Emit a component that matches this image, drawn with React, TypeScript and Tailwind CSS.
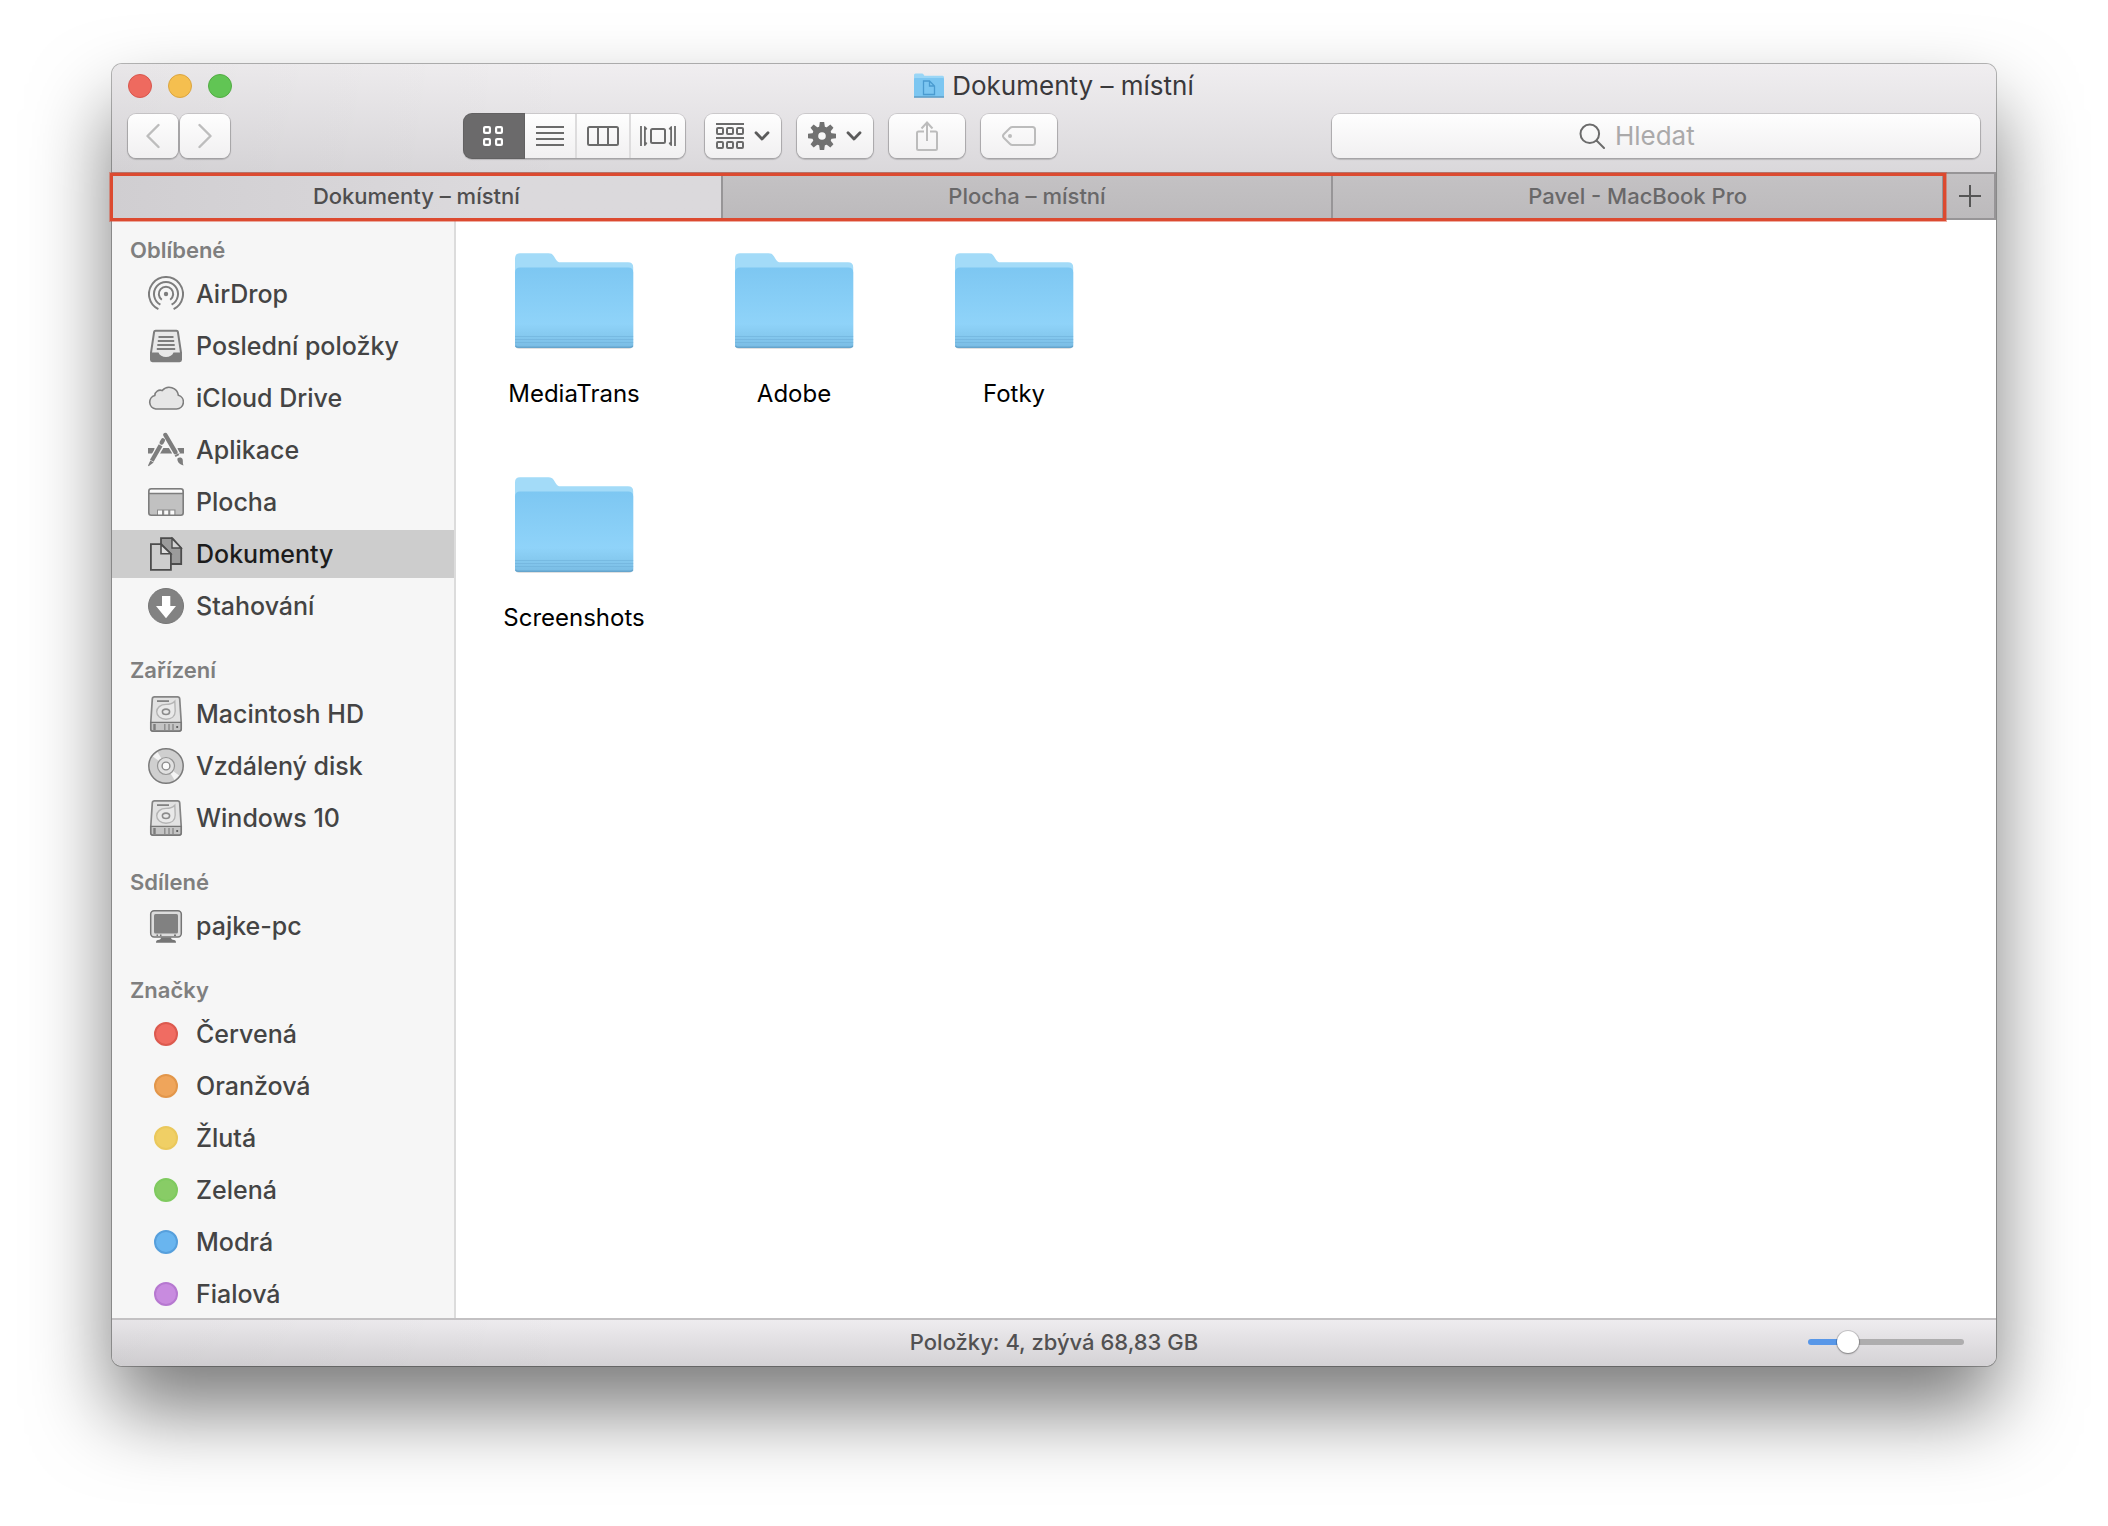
import type { ReactNode } from "react";

type SidebarItem = {
  label: string;
  icon: ReactNode;
  active?: boolean;
};

type SidebarSection = {
  title: string;
  items: SidebarItem[];
};

function AirDropIcon() {
  return (
    <svg viewBox="0 0 36 36" className="size-9" fill="none" stroke="#7d7d7d" strokeWidth="2">
      <path d="M10.4 33.2a17 17 0 1 1 15.2 0" />
      <path d="M12.4 28.6a12 12 0 1 1 11.2 0" />
      <path d="M13.8 23.8a7.2 7.2 0 1 1 8.4 0" />
      <circle cx="18" cy="18" r="2.2" fill="#7d7d7d" stroke="none" />
    </svg>
  );
}

function RecentsIcon() {
  return (
    <svg viewBox="0 0 36 36" className="size-9">
      <path
        d="M7.5 2.8h21q1.2 0 1.4 1.2l3.1 20.5v7.3q0 1.4-1.4 1.4H4.4q-1.4 0-1.4-1.4v-7.3L6.1 4q.2-1.2 1.4-1.2z"
        fill="#e8e8e8"
        stroke="#7d7d7d"
        strokeWidth="2"
      />
      <path d="M3 24.5h7.5c1 2.800 4 4.5 7.5 4.5s6.500-1.700 7.500-4.500H33v8.5H3z" fill="#7d7d7d" />
      <path d="M10.5 9h15M9.800 13h16.400M9.300 17h17.400M8.800 21h18.400" stroke="#7d7d7d" strokeWidth="1.8" />
    </svg>
  );
}

function CloudIcon() {
  return (
    <svg viewBox="0 0 36 36" className="size-9">
      <path
        d="M7.8 29H28.5a7 7 0 0 0 1.9-13.7A9.2 9.2 0 0 0 14.2 10.6 5.4 5.4 0 0 0 6.8 15.5 6.9 6.9 0 0 0 7.8 29z"
        fill="#e6e6e6"
        stroke="#7d7d7d"
        strokeWidth="1.6"
      />
    </svg>
  );
}

function AppsIcon() {
  return (
    <svg viewBox="0 0 36 36" className="size-9" fill="none" stroke="#7d7d7d">
      <path d="M0 18.8h6.5M12 18.8h12M29.5 18.8H36" strokeWidth="5.6" />
      <path d="M3.5 29.5 14 11.2" stroke="#f6f6f6" strokeWidth="7" />
      <path d="M17.2 3 29 22.8" stroke="#f6f6f6" strokeWidth="7" />
      <path d="M3.8 28.8 12.6 13.4" strokeWidth="4.2" />
      <path d="M13.6 10.6 15 8.2" strokeWidth="4.2" strokeLinecap="round" />
      <path d="M2.3 28.4 5.6 30.4.6 34.2 0 33.6z" fill="#7d7d7d" stroke="none" />
      <path d="M17.4 3 27.4 20.2" strokeWidth="4.4" strokeLinecap="round" />
      <path d="M28.4 22.4 29.4 24" strokeWidth="4.2" />
      <path d="M29.4 26.6c1.5-1.8 4.6-1.2 5.2.6.6 2-.2 3.8.9 6.2-3.6-.4-6.6-3.6-6.1-6.8z" fill="#7d7d7d" stroke="none" />
    </svg>
  );
}

function DesktopIcon() {
  return (
    <svg viewBox="0 0 36 36" className="size-9">
      <rect x="0.8" y="4.8" width="34.4" height="26.4" rx="2.4" fill="#c1c1c1" />
      <path d="M1.5 5.5h33v4h-33z" fill="#fafafa" />
      <path d="M9 31v-5.5h18.5V31z" fill="#8a8a8a" />
      <path d="M10 26.5h4V31h-4zM16.2 26.5h4V31h-4zM22.3 26.5h4V31h-4z" fill="#fafafa" />
      <path d="M1 9.5h34" stroke="#7d7d7d" strokeWidth="1.4" />
      <rect x="0.8" y="4.8" width="34.4" height="26.4" rx="2.4" fill="none" stroke="#7d7d7d" strokeWidth="1.6" />
    </svg>
  );
}

function DocumentsIcon() {
  return (
    <svg viewBox="0 0 36 36" className="size-9" stroke="#4c4c4c" strokeWidth="1.8">
      <path d="M13 2.2h11.3L33.2 12v16H13z" fill="#9b9b9b" />
      <path d="M24 2.4V12h9.2z" fill="#d2d2d2" strokeWidth="1.4" />
      <path d="M2.900 8.200h10.300l9.700 9.600v16H2.900z" fill="#cdcdcd" />
      <path d="M13 8.400v9.400h9.700z" fill="#dedede" strokeWidth="1.6" />
    </svg>
  );
}

function DownloadsIcon() {
  return (
    <svg viewBox="0 0 36 36" className="size-9">
      <circle cx="18" cy="18" r="17.5" fill="#828282" stroke="#777" />
      <path d="M14 8h8.3v10H28L18 30.2 8 18h6z" fill="#fff" />
    </svg>
  );
}

function HardDriveIcon() {
  return (
    <svg viewBox="0 0 36 36" className="size-9">
      <path
        d="M6.5.9h23q2 0 2.2 2L33.2 26v7q0 2.100-2.100 2.100H4.900q-2.100 0-2.100-2.100v-7L4.300 2.900q.2-2 2.200-2z"
        fill="#e2e2e2"
        stroke="#858585"
        strokeWidth="1.7"
      />
      <path d="M2.9 26.4h30.200V33q0 2-2 2H4.900q-2 0-2-2z" fill="#c4c4c4" stroke="#757575" strokeWidth="1.4" />
      <path d="M9 5.1h12" stroke="#7d7d7d" strokeWidth="1.7" />
      <path
        d="M26.8 5.2c-2.6 3-5 3.2-8.8 3.2-5.6 0-9.3 3.4-9.3 7.4s4 7.4 9.3 7.4c5.6 0 9.2-3.2 9.2-8.2z"
        fill="#e9e9e9"
        stroke="#b4b4b4"
        strokeWidth="1.4"
      />
      <ellipse cx="18" cy="15.8" rx="3.6" ry="2.7" fill="#e9e9e9" stroke="#8b8b8b" strokeWidth="1.6" />
      <path d="M6.5 28v6" stroke="#7d7d7d" strokeWidth="2.4" />
      <path d="M16.8 28v6M21 28v6M25 28v6" stroke="#8b8b8b" strokeWidth="1.4" />
      <path d="M28.3 30h1.8v2h-1.8z" fill="#5e5e5e" />
    </svg>
  );
}

function DiscIcon() {
  return (
    <svg viewBox="0 0 36 36" className="size-9">
      <circle cx="18" cy="18" r="17" fill="#cfcfcf" />
      <path d="M18 18 4.8 8.5 9.5 4z" fill="#f4f4f4" />
      <path d="M18 18 31.2 27.5 26.5 32z" fill="#f4f4f4" />
      <circle cx="18" cy="18" r="17.2" fill="none" stroke="#7a7a7a" strokeWidth="1.5" />
      <circle cx="18" cy="18" r="8.5" fill="#e0e0e0" stroke="#949494" strokeWidth="1.2" />
      <circle cx="18" cy="18" r="3.9" fill="#fafafa" stroke="#8a8a8a" strokeWidth="1.4" />
    </svg>
  );
}

function ComputerIcon() {
  return (
    <svg viewBox="0 0 36 36" className="size-9">
      <rect x="2.7" y="2.7" width="30.6" height="26.2" rx="3.4" fill="#dcdcdc" stroke="#757575" strokeWidth="1.5" />
      <rect x="6" y="6" width="24" height="19.5" rx="1.5" fill="#818181" />
      <path d="M8.5 26.5H10v1.600H8.500zM12 26.500h1.500v1.600H12zM26 26.500h2v1.600h-2z" fill="#757575" />
      <path d="M13 29.5h10c0 1.5 1 2.2 3 2.6 1.4.3 2 1 2 2.600H8c0-1.600.6-2.300 2-2.600 2-.4 3-1.100 3-2.600z" fill="#757575" />
    </svg>
  );
}

function TagDot({ className }: { className: string }) {
  return (
    <span className="flex size-9 items-center justify-center">
      <span className={`size-6 rounded-full border-2 ${className}`} />
    </span>
  );
}

const sections: SidebarSection[] = [
  {
    title: "Oblíbené",
    items: [
      { label: "AirDrop", icon: <AirDropIcon /> },
      { label: "Poslední položky", icon: <RecentsIcon /> },
      { label: "iCloud Drive", icon: <CloudIcon /> },
      { label: "Aplikace", icon: <AppsIcon /> },
      { label: "Plocha", icon: <DesktopIcon /> },
      { label: "Dokumenty", icon: <DocumentsIcon />, active: true },
      { label: "Stahování", icon: <DownloadsIcon /> },
    ],
  },
  {
    title: "Zařízení",
    items: [
      { label: "Macintosh HD", icon: <HardDriveIcon /> },
      { label: "Vzdálený disk", icon: <DiscIcon /> },
      { label: "Windows 10", icon: <HardDriveIcon /> },
    ],
  },
  {
    title: "Sdílené",
    items: [{ label: "pajke-pc", icon: <ComputerIcon /> }],
  },
  {
    title: "Značky",
    items: [
      { label: "Červená", icon: <TagDot className="border-[#dc5a4f] bg-[#f06c62]" /> },
      { label: "Oranžová", icon: <TagDot className="border-[#e2964a] bg-[#efa55b]" /> },
      { label: "Žlutá", icon: <TagDot className="border-[#eac85c] bg-[#f0cf65]" /> },
      { label: "Zelená", icon: <TagDot className="border-[#7fca5f] bg-[#88cc66]" /> },
      { label: "Modrá", icon: <TagDot className="border-[#569fdc] bg-[#69b5ef]" /> },
      { label: "Fialová", icon: <TagDot className="border-[#b678d0] bg-[#c88bdf]" /> },
    ],
  },
];

const tabs = ["Dokumenty – místní", "Plocha – místní", "Pavel - MacBook Pro"];

const folders = ["MediaTrans", "Adobe", "Fotky", "Screenshots"];

const control =
  "flex h-11 items-center justify-center rounded-lg bg-linear-to-b from-[#fefefe] to-[#f1f0f1] shadow-[0_0_0_1px_rgba(0,0,0,0.1),0_1px_1px_1px_rgba(0,0,0,0.16)]";

function ChevronDown() {
  return (
    <svg viewBox="0 0 16 10" className="h-2.5 w-4" fill="none" stroke="#5b5b5b" strokeWidth="2.8" strokeLinecap="round" strokeLinejoin="round">
      <path d="M2 1.8 8 8l6-6.2" />
    </svg>
  );
}

function GearIcon() {
  return (
    <svg viewBox="-14 -14 28 28" className="size-7">
      {[0, 45, 90, 135].map((angle) => (
        <path key={angle} d="M-2.200-14h4.400l.8 6V8l-.8 6h-4.400L-3 8V-8z" fill="#717171" transform={`rotate(${angle})`} />
      ))}
      <circle r="9.8" fill="#717171" />
      <circle r="3.8" fill="#f8f8f8" />
    </svg>
  );
}

function Folder() {
  return (
    <svg viewBox="0 0 120 100" className="h-[100px] w-[120px]">
      <defs>
        <linearGradient id="folder-front" x1="0" y1="0" x2="0" y2="1">
          <stop offset="0" stopColor="#7dc7f2" />
          <stop offset="0.7" stopColor="#8fd3f9" />
          <stop offset="0.84" stopColor="#86caf0" />
          <stop offset="1" stopColor="#79bce4" />
        </linearGradient>
      </defs>
      <rect x="2" y="90" width="116" height="7" rx="3" fill="#000" opacity="0.12" />
      <path d="M1 94V6.3q0-5 5-5h28.5c2.6 0 4 .8 5.4 3l2.3 3.7c1.2 1.8 2.2 2.3 4.3 2.3H114q5.2 0 5.2 5V94z" fill="#a3dbf8" />
      <path d="M1 20.5q0-5 5-5h108.200q5 0 5 5V93q0 2.600-2.600 2.600H3.600Q1 95.600 1 93z" fill="url(#folder-front)" />
      <path d="M1 84.500h118.200M1 87.500h118.200M1 90.500h118.200" stroke="#6fb1da" strokeWidth="1" opacity="0.6" />
      <path d="M1.5 93.8q.6 1.5 2.500 1.500h112.300q1.900 0 2.500-1.500" fill="none" stroke="#66a5cd" strokeWidth="1.5" />
    </svg>
  );
}

function TitleFolder() {
  return (
    <svg viewBox="0 0 30 26" className="h-[26px] w-[30px]">
      <path d="M0 24V2Q0 .5 1.5.5H8q1 0 1.6 1l.8 1.300h18.100q1.500 0 1.500 1.500V24z" fill="#9ad6f6" />
      <path d="M0 6q0-1 1-1h28q1 0 1 1v18H0z" fill="#7cc6f1" />
      <path d="M0 24h30" stroke="#5f9fc8" strokeWidth="1.6" />
      <path d="M9.500 8h6l5 5v8.500h-11zM15.500 8v5h5" fill="none" stroke="#4a9bd0" strokeWidth="1.3" />
    </svg>
  );
}

function TitleBar() {
  return (
    <header className="rounded-t-[10px] bg-[linear-gradient(to_right,rgba(0,0,0,0.03),transparent_25%),linear-gradient(to_bottom,#f0eef0,#dad8db)] px-4 pb-3.5">
      <div className="grid h-11 grid-cols-[1fr_auto_1fr] items-center">
        <div className="flex gap-4">
          <button type="button" aria-label="Zavřít" className="size-6 rounded-full border border-[#d8564d] bg-[#ee6a5f]" />
          <button type="button" aria-label="Minimalizovat" className="size-6 rounded-full border border-[#dba540] bg-[#f5bf4f]" />
          <button type="button" aria-label="Zvětšit" className="size-6 rounded-full border border-[#52ac43] bg-[#61c554]" />
        </div>
        <h1 className="flex items-center gap-2 text-[26px] leading-8 text-[#3a393b]">
          <TitleFolder />
          Dokumenty – místní
        </h1>
      </div>

      <div className="mt-1.5 flex items-center">
        <div className="flex w-[336px] gap-0.5">
          <button type="button" aria-label="Zpět" className={`${control} w-[50px]`}>
            <svg viewBox="0 0 14 26" className="h-[26px] w-3.5" fill="none" stroke="#bdbdbd" strokeWidth="2.4" strokeLinecap="round" strokeLinejoin="round">
              <path d="M12.5 2 1.5 13l11 11" />
            </svg>
          </button>
          <button type="button" aria-label="Vpřed" className={`${control} w-[50px]`}>
            <svg viewBox="0 0 14 26" className="h-[26px] w-3.5" fill="none" stroke="#bdbdbd" strokeWidth="2.4" strokeLinecap="round" strokeLinejoin="round">
              <path d="M1.5 2l11 11-11 11" />
            </svg>
          </button>
        </div>

        <div className="flex items-center gap-5">
          <div className={`${control} divide-x-2 divide-[#dddcdd]`}>
            <button
              type="button"
              aria-label="Ikony"
              aria-pressed="true"
              className="flex h-full w-[60px] items-center justify-center rounded-l-lg border-r-[#6b6a6b] bg-[#6b6a6b] shadow-[0_0_0_1px_#626162]"
            >
              <svg viewBox="0 0 20 20" className="size-5" fill="none" stroke="#fff" strokeWidth="2.2">
                <rect x="1.1" y="1.1" width="5.8" height="5.8" rx="1" />
                <rect x="13.1" y="1.1" width="5.8" height="5.8" rx="1" />
                <rect x="1.1" y="13.1" width="5.8" height="5.8" rx="1" />
                <rect x="13.1" y="13.1" width="5.8" height="5.8" rx="1" />
              </svg>
            </button>
            <button type="button" aria-label="Seznam" className="flex h-full w-[53px] items-center justify-center">
              <svg viewBox="0 0 28 20" className="h-5 w-7" stroke="#6b6b6b" strokeWidth="2">
                <path d="M0 1h28M0 7h28M0 13h28M0 19h28" />
              </svg>
            </button>
            <button type="button" aria-label="Sloupce" className="flex h-full w-[54px] items-center justify-center">
              <svg viewBox="0 0 32 20" className="h-5 w-8" fill="none" stroke="#6b6b6b" strokeWidth="2">
                <rect x="1" y="1" width="30" height="18" rx="1.5" />
                <path d="M11 1v18M21 1v18" />
              </svg>
            </button>
            <button type="button" aria-label="Cover Flow" className="flex h-full w-[54px] items-center justify-center">
              <svg viewBox="0 0 36 20" className="h-5 w-9" fill="none" stroke="#6b6b6b" strokeWidth="2">
                <rect x="11" y="3" width="14" height="14" rx="1.5" />
                <path d="M1 0v20M35 0v20" strokeWidth="1.8" />
                <path
                  d="M4 0v20l1.800-.6 1.600-2.400-1.600-1V4l1.600-1L5.800.8zM32 0v20l-1.800-.6-1.600-2.400 1.600-1V4l-1.600-1L30.200.8z"
                  fill="#6b6b6b"
                  stroke="none"
                />
              </svg>
            </button>
          </div>

          <div className="flex gap-4">
            <button type="button" aria-label="Uspořádat" className={`${control} w-[76px] gap-2.5`}>
              <svg viewBox="0 0 28 26" className="h-[26px] w-7" fill="none" stroke="#6b6b6b" strokeWidth="2">
                <path d="M0 1h28M0 15h28" />
                <rect x="1" y="5" width="6" height="6" rx="1" />
                <rect x="11" y="5" width="6" height="6" rx="1" />
                <rect x="21" y="5" width="6" height="6" rx="1" />
                <rect x="1" y="19" width="6" height="6" rx="1" />
                <rect x="11" y="19" width="6" height="6" rx="1" />
                <rect x="21" y="19" width="6" height="6" rx="1" />
              </svg>
              <ChevronDown />
            </button>
            <button type="button" aria-label="Akce" className={`${control} w-[76px] gap-2.5`}>
              <GearIcon />
              <ChevronDown />
            </button>
            <button type="button" aria-label="Sdílet" className={`${control} w-[76px]`}>
              <svg viewBox="0 0 22 30" className="h-[30px] w-[22px]" fill="none" stroke="#bcbcbc" strokeWidth="2">
                <path d="M8 10.5H2.5Q1 10.5 1 12v15.5Q1 29 2.5 29h17q1.5 0 1.500-1.500V12q0-1.500-1.500-1.500H14M11 20V2M5.500 7.500 11 1.500l5.500 6" />
              </svg>
            </button>
            <button type="button" aria-label="Značky" className={`${control} w-[76px]`}>
              <svg viewBox="0 0 34 20" className="h-5 w-[34px]" fill="none" stroke="#bcbcbc" strokeWidth="2">
                <path d="M10.5 1h20Q33 1 33 3.500v13q0 2.500-2.500 2.500h-20Q9 19 8 18l-6-6Q0 10 2 8l6-6Q9 1 10.500 1z" />
                <circle cx="8" cy="10" r="2" fill="#bcbcbc" stroke="none" />
              </svg>
            </button>
          </div>
        </div>

        <label className={`${control} ml-auto w-[35%] gap-2.5`}>
          <svg viewBox="0 0 26 26" className="size-[26px]" fill="none" stroke="#6b6b6b" strokeWidth="2" strokeLinecap="round">
            <circle cx="10.8" cy="10.8" r="9.3" />
            <path d="M17.5 17.5 25 25" />
          </svg>
          <input
            type="search"
            aria-label="Hledat"
            placeholder="Hledat"
            className="w-[118px] bg-transparent text-[26px] leading-8 text-[#3f3e40] outline-none placeholder:text-[#aaa9aa]"
          />
        </label>
      </div>
    </header>
  );
}

function TabBar() {
  return (
    <nav className="flex h-12 border-y-2 border-r-2 border-[#979597]">
      <div className="relative flex flex-1 divide-x-2 divide-[#979597]">
        {tabs.map((tab, index) => (
          <button
            key={tab}
            type="button"
            className={`flex-1 text-[22px] leading-7 font-medium ${
              index === 0
                ? "bg-linear-to-r from-[#d0ced1] to-[#dbd9dc] to-60% text-[#4f4e4f]"
                : "bg-linear-to-b from-[#c4c2c4] to-[#bcbabc] text-[#696869]"
            }`}
          >
            {tab}
          </button>
        ))}
        {/* outline around the open tabs */}
        <div className="pointer-events-none absolute -top-px -right-0.5 -bottom-[3px] -left-0.5 border-[3px] border-[#dc4a30] shadow-[0_0_0_1px_rgba(220,74,48,0.45)]" />
      </div>
      <button type="button" aria-label="Nový panel" className="flex w-[50px] items-center justify-center bg-linear-to-b from-[#c4c2c4] to-[#bcbabc] pl-0.5">
        <svg viewBox="0 0 22 22" className="size-[22px]" stroke="#555" strokeWidth="2">
          <path d="M11 0v22M0 11h22" />
        </svg>
      </button>
    </nav>
  );
}

function Sidebar() {
  return (
    <aside className="flex w-[344px] shrink-0 flex-col gap-2.5 border-r-2 border-[#dcdcdc] bg-[#f6f6f6]">
      {sections.map((section) => (
        <section key={section.title}>
          <h2 className="pt-4 pb-1.5 pl-[18px] text-[22px] leading-7 font-semibold text-[#7f7f7f]">{section.title}</h2>
          <ul className="flex flex-col gap-1">
            {section.items.map((item) => (
              <li key={item.label}>
                <a
                  href="#"
                  className={`flex h-12 items-center gap-3 pl-9 text-[25px] leading-8 font-medium ${
                    item.active ? "bg-[#cdcdcd] text-[#1c1c1c]" : "text-[#444]"
                  }`}
                >
                  {item.icon}
                  {item.label}
                </a>
              </li>
            ))}
          </ul>
        </section>
      ))}
    </aside>
  );
}

function StatusBar() {
  return (
    <footer className="grid h-12 grid-cols-[1fr_auto_1fr] items-center rounded-b-[10px] border-t-2 border-[#c3c1c3] bg-[linear-gradient(to_right,rgba(0,0,0,0.03),transparent_25%),linear-gradient(to_bottom,#eeecef,#d4d2d5)] pr-8 pb-0.5">
      <p className="col-start-2 pl-8 text-[22px] leading-7 font-medium text-[#525152]">Položky: 4, zbývá 68,83 GB</p>
      <input
        type="range"
        aria-label="Velikost ikon"
        defaultValue={22}
        className="h-[22px] w-[156px] appearance-none justify-self-end bg-transparent [&::-webkit-slider-runnable-track]:h-1.5 [&::-webkit-slider-runnable-track]:rounded-full [&::-webkit-slider-runnable-track]:bg-[linear-gradient(to_right,#5897e8_26%,#aeadae_26%)] [&::-webkit-slider-thumb]:-mt-2 [&::-webkit-slider-thumb]:size-[22px] [&::-webkit-slider-thumb]:appearance-none [&::-webkit-slider-thumb]:rounded-full [&::-webkit-slider-thumb]:bg-white [&::-webkit-slider-thumb]:shadow-[0_0_0_1px_rgba(0,0,0,0.15),0_1px_2px_rgba(0,0,0,0.3)]"
      />
    </footer>
  );
}

export default function App() {
  return (
    <div className="flex min-h-screen bg-white px-28 pt-16 pb-40 font-['Inter',sans-serif]">
      <div className="flex flex-1 flex-col rounded-[10px] shadow-[0_0_0_1px_rgba(0,0,0,0.28),0_44px_80px_rgba(0,0,0,0.52)]">
        <TitleBar />
        <TabBar />
        <div className="flex flex-1">
          <Sidebar />
          <main className="flex-1 bg-white pt-8 pl-2">
            <ul className="grid grid-cols-[repeat(3,220px)] gap-y-[68px]">
              {folders.map((name) => (
                <li key={name}>
                  <button type="button" className="flex w-full flex-col items-center gap-7 text-2xl leading-7 text-black">
                    <Folder />
                    {name}
                  </button>
                </li>
              ))}
            </ul>
          </main>
        </div>
        <StatusBar />
      </div>
    </div>
  );
}
